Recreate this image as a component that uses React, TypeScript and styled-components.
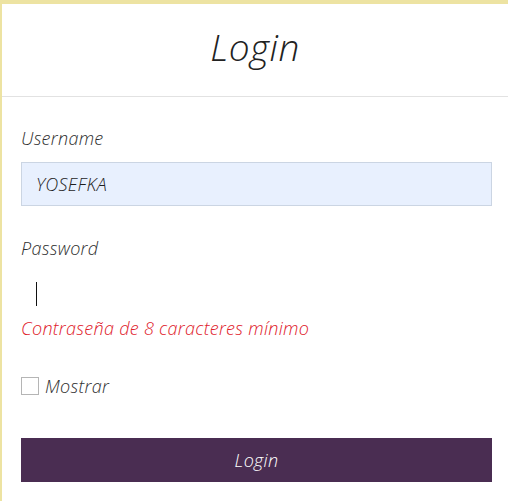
import React from 'react';
import styled, { createGlobalStyle } from 'styled-components';

const GlobalStyle = createGlobalStyle`
  html, body {
    margin: 0;
    padding: 0;
    background: #ede3a2;
    font-family: "Open Sans", Lato, sans-serif;
  }
`;

const Card = styled.div`
  margin: 4px 0 0 2px;
  height: 497px;
  background: #fff;
  box-sizing: border-box;
`;

const Header = styled.div`
  height: 93px;
  box-sizing: border-box;
  padding-bottom: 8px;
  display: flex;
  align-items: center;
  justify-content: center;
  border-bottom: 1px solid #e2e2e2;
`;

const Title = styled.h1`
  margin: 0;
  font-size: 37px;
  font-weight: 300;
  font-style: italic;
  color: #222;
  letter-spacing: 0.5px;
`;

const Body = styled.form`
  padding: 29px 16px 0 19px;
  display: flex;
  flex-direction: column;
`;

const Label = styled.label`
  font-size: 18px;
  font-style: italic;
  font-weight: 300;
  letter-spacing: 0.3px;
  color: #2e2e2e;
  line-height: 24px;
  margin-bottom: 12px;
`;

const Input = styled.div<{ $filled?: boolean }>`
  height: 44px;
  box-sizing: border-box;
  display: flex;
  align-items: center;
  padding-left: 14px;
  font-size: 18px;
  font-style: italic;
  font-weight: 300;
  letter-spacing: 0.3px;
  color: #1e1e1e;
  background: ${p => (p.$filled ? '#e8f0fe' : '#fff')};
  border: 1px solid ${p => (p.$filled ? '#cbd5e3' : 'transparent')};
  margin-bottom: 30px;
`;

const Caret = styled.span`
  width: 1px;
  height: 24px;
  background: #111;
`;

const ErrorText = styled.div`
  font-size: 18px;
  font-style: italic;
  font-weight: 300;
  letter-spacing: 0.3px;
  color: #e0202a;
  line-height: 24px;
  margin-top: -30px;
  margin-bottom: 34px;
`;

const CheckRow = styled.label`
  display: flex;
  align-items: center;
  gap: 6px;
  height: 24px;
  font-size: 18px;
  font-style: italic;
  font-weight: 300;
  letter-spacing: 0.3px;
  color: #2e2e2e;
  margin-bottom: 40px;
`;

const Box = styled.span`
  width: 16px;
  height: 16px;
  border: 1px solid #b5b5b5;
  background: #fff;
`;

const Button = styled.button`
  height: 44px;
  border: none;
  background: #4a2d52;
  color: #fff;
  font-family: inherit;
  font-size: 18px;
  font-style: italic;
  font-weight: 300;
  letter-spacing: 0.3px;
  cursor: pointer;
`;

export default function App() {
  return (
    <>
      <GlobalStyle />
      <Card>
        <Header>
          <Title>Login</Title>
        </Header>
        <Body>
          <Label>Username</Label>
          <Input $filled>YOSEFKA</Input>
          <Label>Password</Label>
          <Input>
            <Caret />
          </Input>
          <ErrorText>Contraseña de 8 caracteres mínimo</ErrorText>
          <CheckRow>
            <Box />
            Mostrar
          </CheckRow>
          <Button type="button">Login</Button>
        </Body>
      </Card>
    </>
  );
}
